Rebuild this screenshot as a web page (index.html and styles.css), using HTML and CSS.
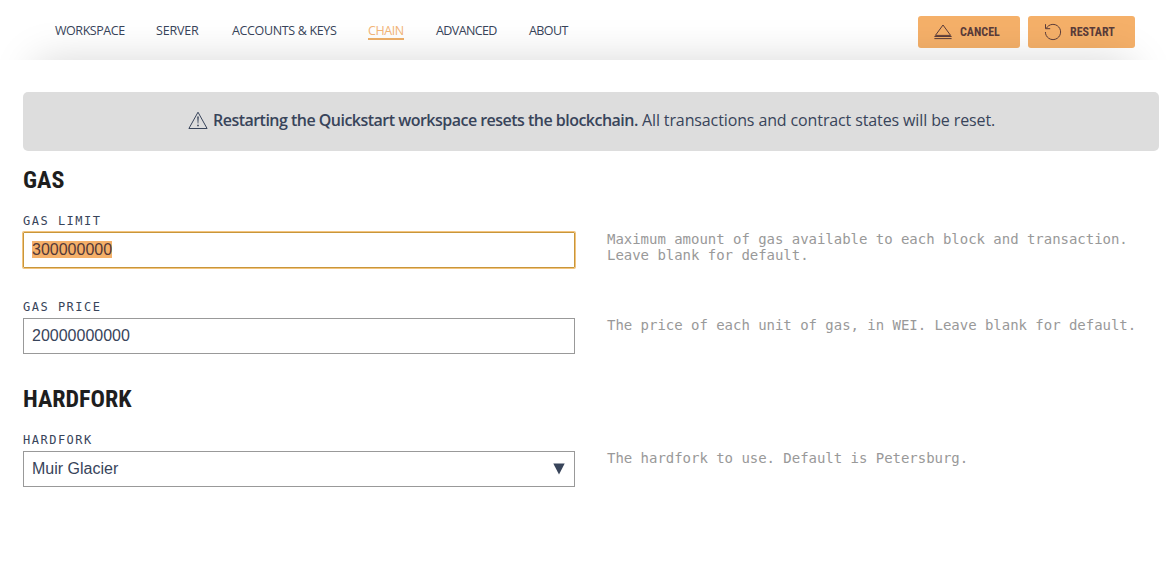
FILE: index.html
```
<!DOCTYPE html>
<html lang="en">
<head>
<meta charset="utf-8">
<title>Chain settings</title>
<link rel="stylesheet" href="styles.css">
</head>
<body>
<header class="topbar">
  <nav class="tabs">
    <a class="tab tab-workspace"><span>WORKSPACE</span></a>
    <a class="tab tab-server"><span>SERVER</span></a>
    <a class="tab tab-accounts"><span>ACCOUNTS &amp; KEYS</span></a>
    <a class="tab tab-chain active"><span>CHAIN</span></a>
    <a class="tab tab-advanced"><span>ADVANCED</span></a>
    <a class="tab tab-about"><span>ABOUT</span></a>
  </nav>
  <div class="actions">
    <button class="btn btn-cancel">
      <svg width="18" height="18" viewBox="0 0 18 18"><path d="M9 2 1.4 12.4H16.6ZM.4 13.5H17.6M.4 15.6H17.6"/></svg>
      <span>CANCEL</span>
    </button>
    <button class="btn btn-restart">
      <svg width="18" height="18" viewBox="0 0 18 18"><path d="M2.3 5.4A7.6 7.6 0 1 1 1.4 9M1.5 1.2V5.7H6.2"/></svg>
      <span>RESTART</span>
    </button>
  </div>
</header>
<main class="content">
  <div class="notice">
    <svg class="warn" width="20" height="18" viewBox="0 0 20 18"><path d="M10 1.2.9 17.5H19.1Z"/><path class="mark" d="M9.2 5.6H10.8L10.3 12.4H9.7ZM9.2 13.8H10.8V15.2H9.2Z"/></svg>
    <span class="strong"><b>Restarting the Quickstart workspace resets the blockchain.</b></span>
    <span class="rest">All transactions and contract states will be reset.</span>
  </div>
  <h2>GAS</h2>
  <h4>GAS LIMIT</h4>
  <div class="row">
    <div class="field focused"><span class="selected">300000000</span></div>
    <p>Maximum amount of gas available to each block and transaction.<br>Leave blank for default.</p>
  </div>
  <h4>GAS PRICE</h4>
  <div class="row">
    <div class="field">20000000000</div>
    <p>The price of each unit of gas, in WEI. Leave blank for default.</p>
  </div>
  <h2 class="next">HARDFORK</h2>
  <h4>HARDFORK</h4>
  <div class="row">
    <div class="field">Muir Glacier<svg class="caret" width="12" height="12" viewBox="0 0 12 12"><path d="M.3.5H11.7L6 11.6Z"/></svg></div>
    <p>The hardfork to use. Default is Petersburg.</p>
  </div>
</main>
</body>
</html>
```
FILE: styles.css
```
* { box-sizing: border-box; }
body { margin: 0; height: 564px; overflow: hidden; background: #fff; color: #38445a; font-family: "Open Sans", "Noto Sans", sans-serif; }
.topbar { height: 60px; display: flex; justify-content: space-between; align-items: flex-start; padding: 16px 32px 0 55px; }
.tabs { display: flex; gap: 32px; padding-top: 6px; }
.tab { height: 18px; font-size: 12.5px; line-height: 17px; white-space: nowrap; letter-spacing: -.45px; }
.tab-workspace { width: 69px; }
.tab-server { width: 44px; letter-spacing: -.2px; }
.tab-accounts { width: 104px; letter-spacing: -.35px; }
.tab-chain { width: 36px; }
.tab-advanced { width: 61px; letter-spacing: -.6px; }
.tab-about { width: 39px; letter-spacing: -.6px; }
.tab.active { color: #f3b577; border-bottom: 2px solid #efb069; }
.actions { display: flex; gap: 8px; }
.btn { display: flex; align-items: center; gap: 8px; height: 32px; border: 0; border-radius: 3px; padding: 0 0 0 16px; background: #f5b069; color: #5b3c3a; font: 700 12px/32px "Roboto", sans-serif; font-stretch: 75%; white-space: nowrap; }
.btn-cancel { width: 102px; }
.btn-restart { width: 107px; }
.btn svg { flex: none; fill: none; stroke: #5b3c3a; stroke-width: 1; }
.content { position: relative; height: 504px; padding: 32px 8px 0 23px; background: #fff; box-shadow: 0 -34px 40px -36px rgba(0, 0, 0, .17); }
.notice { display: flex; height: 59px; padding: 0 0 3px 165px; align-items: center; border-radius: 5px; background: #ddd; font-size: 16px; line-height: 24px; white-space: nowrap; }
.warn { flex: none; margin-right: 5px; fill: none; stroke: #38445a; stroke-width: 1; }
.warn .mark { fill: #38445a; stroke: none; }
.strong { width: 429px; }
.strong b { font-weight: 600; letter-spacing: -.52px; }
.rest { letter-spacing: -.12px; }
h2 { height: 28px; margin: 15px 0 19px; color: #1e1e1e; font: 700 24px/28px "Roboto", sans-serif; font-stretch: 75%; }
.next { margin-top: 0; }
h4 { height: 16px; margin: 0 0 3px; font: 400 12px/16px "DejaVu Sans Mono", monospace; letter-spacing: 1.5px; }
.row { display: grid; grid-template-columns: 552px 1fr; column-gap: 32px; height: 67px; }
.field { display: flex; justify-content: space-between; align-items: center; height: 36px; padding: 0 9px 1px 8px; border: 1px solid #999; font: 16px/17px "Liberation Sans", sans-serif; }
.focused { border-color: #c8963a; border-radius: 1px; box-shadow: 0 0 0 1px #f3c47e; }
.selected { background: #f5b069; color: #533838; }
.caret { fill: #38445a; }
.row p { margin: -1px 0 0; font: 400 14px/16px "DejaVu Sans Mono", monospace; letter-spacing: -.03px; color: #999; white-space: nowrap; }
```
